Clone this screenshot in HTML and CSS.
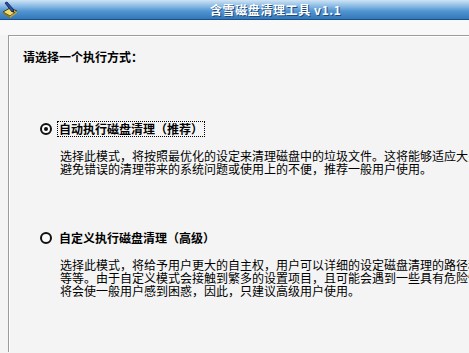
FILE: index.html
```html
<!DOCTYPE html>
<html lang="zh-CN">
<head>
<meta charset="utf-8">
<title>含雪磁盘清理工具 v1.1</title>
<link rel="stylesheet" href="styles.css">
</head>
<body>
<div class="titlebar">
  <svg class="title-icon" width="18" height="18" viewBox="0 0 18 18">
    <path d="M2 11 L9 7 L16 10 L9 15 Z" fill="#f2dc6a" stroke="#3a3a20" stroke-width="1"/>
    <path d="M2 11 L2 13 L9 17 L9 15 Z" fill="#8a7a30"/>
    <path d="M9 15 L9 17 L16 12 L16 10 Z" fill="#b8a040"/>
    <path d="M4 2 L6 1 L13 9 L11 11 Z" fill="#2a50a0" stroke="#102050" stroke-width="0.8"/>
    <path d="M11 11 L13 9 L13.5 12 Z" fill="#222"/>
  </svg>
  <span class="title-text">含雪磁盘清理工具 v1.1</span>
</div>
<div class="strip"></div>
<div class="panel">
  <div class="heading">请选择一个执行方式：</div>
  <div class="option first">
    <div class="option-row">
      <span class="radio checked"></span>
      <span class="label focused">自动执行磁盘清理（推荐）</span>
    </div>
    <div class="desc">
      <div class="line">选择此模式，将按照最优化的设定来清理磁盘中的垃圾文件。这将能够适应大多</div>
      <div class="line">避免错误的清理带来的系统问题或使用上的不便，推荐一般用户使用。</div>
    </div>
  </div>
  <div class="option second">
    <div class="option-row">
      <span class="radio"></span>
      <span class="label">自定义执行磁盘清理（高级）</span>
    </div>
    <div class="desc">
      <div class="line">选择此模式，将给予用户更大的自主权，用户可以详细的设定磁盘清理的路径和</div>
      <div class="line">等等。由于自定义模式会接触到繁多的设置项目，且可能会遇到一些具有危险性</div>
      <div class="line">将会使一般用户感到困惑，因此，只建议高级用户使用。</div>
    </div>
  </div>
</div>
</body>
</html>
```
FILE: styles.css
```css
html, body {
  margin: 0;
  padding: 0;
  background: #f4f4f4;
  overflow: hidden;
}
body {
  width: 469px;
  height: 353px;
  font-family: "Noto Sans CJK SC", "Noto Sans", sans-serif;
  font-size: 12px;
  color: #000;
}
.titlebar {
  height: 19px;
  border-bottom: 1px solid #1d4f88;
  background: linear-gradient(to bottom, #cfe3f4 0%, #8dbde6 30%, #4f93d0 60%, #3478bc 100%);
  display: flex;
  align-items: center;
}
.title-icon {
  margin-left: 1px;
  flex: none;
}
.title-text {
  margin-left: 191px;
  color: #fff;
  font-weight: bold;
  font-size: 12px;
  line-height: 14px;
  letter-spacing: 0.6px;
  text-shadow: 1px 1px 0 #1b4a80;
}
.strip {
  height: 15px;
  background: #f9f8f9;
  border-top-left-radius: 3px;
}
.panel {
  margin-left: 8px;
  height: 317px;
  border-top: 1px solid #9c9c9c;
  border-left: 1px solid #9c9c9c;
  box-shadow: inset 1px 1px 0 #ffffff;
  background: #f4f4f4;
  padding: 15px 0 0 14px;
  box-sizing: border-box;
  white-space: nowrap;
  overflow: hidden;
}
.heading {
  font-weight: bold;
  line-height: 12px;
  height: 12px;
}
.option {
  padding-left: 17px;
}
.option.first {
  margin-top: 58px;
}
.option.second {
  margin-top: 55px;
}
.option-row {
  display: flex;
  align-items: center;
  height: 16px;
}
.radio {
  width: 8px;
  height: 8px;
  border: 2px solid #111;
  border-radius: 50%;
  background: #fbfbfb;
  display: flex;
  align-items: center;
  justify-content: center;
  flex: none;
}
.radio.checked::after {
  content: "";
  width: 4px;
  height: 4px;
  border-radius: 50%;
  background: #111;
}
.label {
  margin-left: 5px;
  font-weight: bold;
  line-height: 12px;
  padding: 1px 1px;
  border: 1px dotted transparent;
}
.label.focused {
  border-color: #000;
}
.desc {
  margin-top: 12px;
  padding-left: 20px;
}
.line {
  line-height: 13px;
  height: 13px;
  white-space: nowrap;
}
```
